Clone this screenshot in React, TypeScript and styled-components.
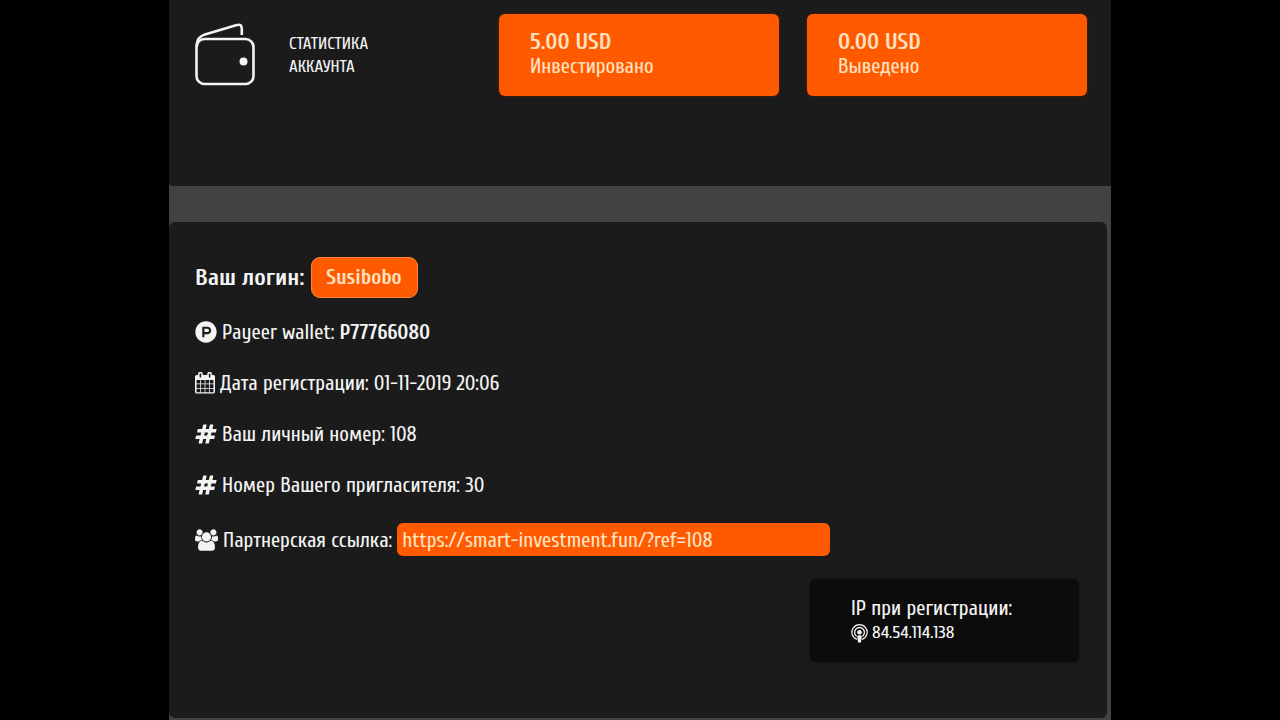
import React from "react";
import styled, { createGlobalStyle } from "styled-components";
import { FaProductHunt } from "react-icons/fa";

const GlobalStyle = createGlobalStyle`
  * {
    box-sizing: border-box;
  }
  body {
    margin: 0;
    background: #000;
    color: #f4f4f4;
    font-family: Cuprum, "Liberation Sans Narrow", "DejaVu Sans Condensed", sans-serif;
    font-size: 21px;
    line-height: 24px;
  }
`;

const Page = styled.main`
  max-width: 942px;
  min-height: 100vh;
  margin: 0 auto;
  background: #424242;
  display: flex;
  flex-direction: column;
  gap: 36px;
`;

const StatsPanel = styled.section`
  display: flex;
  align-items: flex-start;
  gap: 28px;
  padding: 14px 24px 90px 26px;
  background: #1b1b1b;
  border-radius: 0 0 0 4px;
`;

const StatsTitle = styled.div`
  flex: 1;
  display: flex;
  align-items: center;
  gap: 34px;
  padding-top: 9px;
`;

const Caption = styled.h2`
  margin: 0;
  font-size: 17px;
  line-height: 23px;
  font-weight: 400;
  text-transform: uppercase;
`;

const StatCard = styled.div`
  width: 280px;
  height: 82px;
  padding: 16px 31px;
  background: #ff5a00;
  border-radius: 6px;
  box-shadow: 0 0 3px #6a2400;
  color: #ffe2c0;
`;

const StatValue = styled.strong`
  display: block;
  font-size: 23px;
`;

const AccountPanel = styled.section`
  margin: 0 4px 2px 0;
  padding: 35px 28px 56px 26px;
  background: #1b1b1b;
  border-radius: 6px;
  display: flex;
  flex-direction: column;
`;

const LoginRow = styled.div`
  display: flex;
  align-items: center;
  gap: 7px;
  font-size: 24px;
  font-weight: 700;
`;

const LoginBadge = styled.span`
  padding: 7px 15px 8px 14px;
  background: #ff5a00;
  border: 1px solid #ff8340;
  border-radius: 9px;
  color: #ffe2c0;
  font-size: 21px;
`;

const Details = styled.div`
  display: flex;
  flex-direction: column;
  gap: 20px;
  margin-top: 18px;
`;

const Row = styled.div<{ $tall?: boolean }>`
  display: flex;
  align-items: center;
  gap: 5px;
  min-height: ${(p) => (p.$tall ? 39 : 31)}px;

  svg {
    flex: none;
  }
`;

const LinkField = styled.input`
  width: 433px;
  height: 33px;
  margin: 0;
  padding: 0 5px;
  border: 0;
  border-radius: 6px;
  background: #ff5a00;
  color: #ffe2c0;
  font: inherit;
`;

const IpCard = styled.aside`
  align-self: flex-end;
  width: 269px;
  height: 83px;
  padding: 17px 41px;
  background: #0c0c0c;
  border-radius: 6px;
  box-shadow: 0 0 3px #111;
`;

const IpValue = styled.div`
  display: flex;
  align-items: center;
  gap: 4px;
  font-size: 18px;
  line-height: 26px;
`;

const WalletIcon = () => (
  <svg width="60" height="64" viewBox="0 1 60 64" fill="none" stroke="#f4f4f4" strokeWidth="2.6" aria-hidden="true">
    <rect x="1.5" y="17" width="57" height="45" rx="8" />
    <path d="M1.8 25C2 17 4 14.6 10 12.4L41 3.2C45 2 46.8 3 46.8 7V13" />
    <circle cx="48.5" cy="39.5" r="4" fill="#f4f4f4" stroke="none" />
  </svg>
);

const CalendarIcon = () => (
  <svg width="20" height="22" viewBox="64 0 1664 1792" fill="currentColor" aria-hidden="true">
    <path d="M192 1664h288v-288h-288v288zm352 0h320v-288h-320v288zm-352-352h288v-320h-288v320zm352 0h320v-320h-320v320zm-352-384h288v-288h-288v288zm736 736h320v-288h-320v288zm-384-736h320v-288h-320v288zm768 736h288v-288h-288v288zm-384-352h320v-320h-320v320zm-352-896v-288q0-13-9.500-22.500t-22.500-9.500h-64q-13 0-22.500 9.500t-9.500 22.500v288q0 13 9.500 22.500t22.500 9.500h64q13 0 22.500-9.500t9.500-22.500zm736 896h288v-320h-288v320zm-384-384h320v-288h-320v288zm384 0h288v-288h-288v288zm32-512v-288q0-13-9.500-22.500t-22.500-9.500h-64q-13 0-22.500 9.500t-9.500 22.500v288q0 13 9.500 22.500t22.500 9.500h64q13 0 22.500-9.500t9.500-22.500zm384-64v1280q0 52-38 90t-90 38h-1408q-52 0-90-38t-38-90v-1280q0-52 38-90t90-38h128v-96q0-66 47-113t113-47h64q66 0 113 47t47 113v96h384v-96q0-66 47-113t113-47h64q66 0 113 47t47 113v96h128q52 0 90 38t38 90z" />
  </svg>
);

const HashIcon = () => (
  <svg width="22" height="22" viewBox="0 0 1792 1792" fill="currentColor" aria-hidden="true">
    <path d="M991 1024l64-256h-254l-64 256h254zm768-504l-56 224q-7 24-31 24h-327l-64 256h311q15 0 25 12 10 14 6 28l-56 224q-5 24-31 24h-327l-81 328q-7 24-31 24h-224q-16 0-26-12-9-12-6-28l78-312h-254l-81 328q-7 24-31 24h-225q-15 0-25-12-9-12-6-28l78-312h-311q-15 0-25-12-9-12-6-28l56-224q7-24 31-24h327l64-256h-311q-15 0-25-12-10-14-6-28l56-224q5-24 31-24h327l81-328q7-24 32-24h224q15 0 25 12 9 12 6 28l-78 312h254l81-328q7-24 32-24h224q15 0 25 12 9 12 6 28l-78 312h311q15 0 25 12 9 12 6 28z" />
  </svg>
);

const UsersIcon = () => (
  <svg width="23" height="22" viewBox="64 0 1920 1792" fill="currentColor" aria-hidden="true">
    <path d="M657 896q-162 5-265 128h-134q-82 0-138-40.500t-56-118.500q0-353 124-353 6 0 43.500 21t97.500 42.500 119 21.500q67 0 133-23-5 37-5 66 0 159 93 256zm1071 637q0 120-73 189.500t-194 69.500h-874q-121 0-194-69.500t-73-189.500q0-53 3.500-103.500t14-109 26.500-108.500 43-97.500 62-81 85.500-53.500 111.500-20q10 0 43 21.500t73 48 107 48 135 21.500 135-21.500 107-48 73-48 43-21.500q61 0 111.500 20t85.500 53.500 62 81 43 97.500 26.500 108.500 14 109 3.500 103.500zm-1024-1277q0 106-75 181t-181 75-181-75-75-181 75-181 181-75 181 75 75 181zm704 384q0 159-112.500 271.500t-271.500 112.500-271.500-112.500-112.500-271.500 112.500-271.500 271.500-112.500 271.500 112.500 112.500 271.500zm576 225q0 78-56 118.500t-138 40.500h-134q-103-123-265-128 93-97 93-256 0-29-5-66 66 23 133 23 59 0 119-21.500t97.500-42.500 43.500-21q124 0 124 353zm-128-609q0 106-75 181t-181 75-181-75-75-181 75-181 181-75 181 75 75 181z" />
  </svg>
);

const PodcastIcon = () => (
  <svg width="17" height="19" viewBox="0 0 17 19" fill="none" stroke="currentColor" strokeWidth="1.3" strokeLinecap="round" aria-hidden="true">
    <path d="M5.4 15.2A7.6 7.6 0 1 1 11.600 15.2" />
    <path d="M5.2 12A4.900 4.900 0 1 1 11.800 12" />
    <circle cx="8.5" cy="8.2" r="2.3" fill="currentColor" stroke="none" />
    <path d="M6.2 12.600Q6.300 11.300 8.500 11.300T10.800 12.600L10.100 17.500Q9.900 18.800 8.500 18.800T6.900 17.500Z" fill="currentColor" stroke="none" />
  </svg>
);

export default function App() {
  return (
    <>
      <GlobalStyle />
      <Page>
        <StatsPanel>
          <StatsTitle>
            <WalletIcon />
            <Caption>
              Статистика
              <br />
              аккаунта
            </Caption>
          </StatsTitle>
          <StatCard>
            <StatValue>5.00 USD</StatValue>
            Инвестировано
          </StatCard>
          <StatCard>
            <StatValue>0.00 USD</StatValue>
            Выведено
          </StatCard>
        </StatsPanel>

        <AccountPanel>
          <LoginRow>
            Ваш логин: <LoginBadge>Susibobo</LoginBadge>
          </LoginRow>
          <Details>
            <Row>
              <FaProductHunt size={22} aria-hidden="true" />
              <span>
                Payeer wallet: <strong>P77766080</strong>
              </span>
            </Row>
            <Row>
              <CalendarIcon />
              <span>Дата регистрации: 01-11-2019 20:06</span>
            </Row>
            <Row>
              <HashIcon />
              <span>Ваш личный номер: 108</span>
            </Row>
            <Row>
              <HashIcon />
              <span>Номер Вашего пригласителя: 30</span>
            </Row>
            <Row $tall>
              <UsersIcon />
              <label htmlFor="partner-link">Партнерская ссылка:</label>
              <LinkField id="partner-link" type="text" readOnly value="https://smart-investment.fun/?ref=108" />
            </Row>
            <IpCard>
              <div>IP при регистрации:</div>
              <IpValue>
                <PodcastIcon />
                84.54.114.138
              </IpValue>
            </IpCard>
          </Details>
        </AccountPanel>
      </Page>
    </>
  );
}
